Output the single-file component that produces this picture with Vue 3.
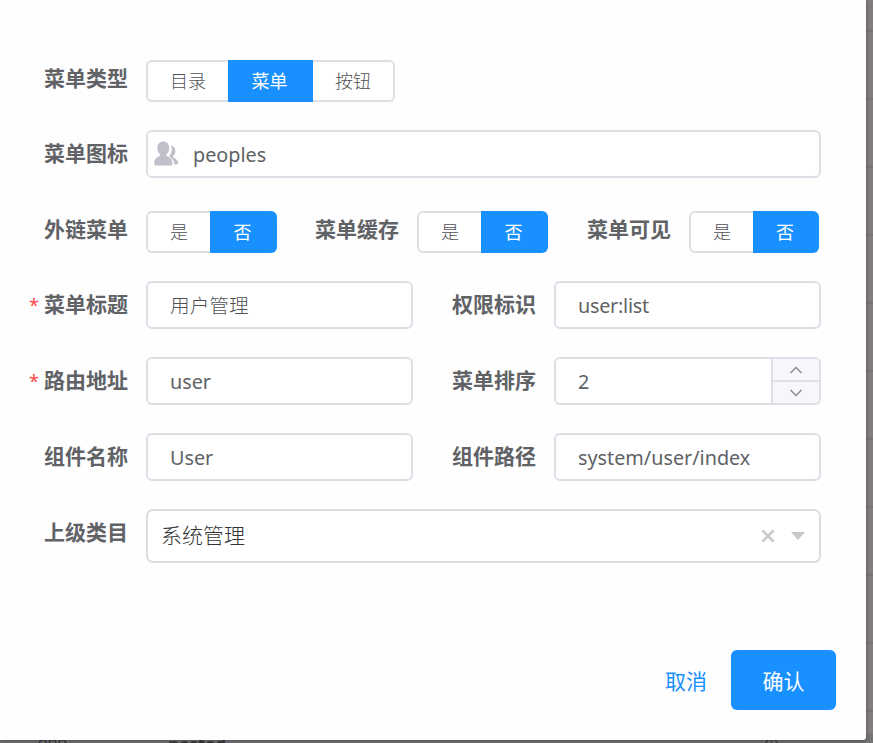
<script setup>
import { ref } from 'vue'

const menuType = ref('菜单')
const menuTypes = ['目录', '菜单', '按钮']
const switches = ref([
  { label: '外链菜单', value: '否' },
  { label: '菜单缓存', value: '否' },
  { label: '菜单可见', value: '否' },
])
const tableLines = Array.from({ length: 11 }, (_, i) => i)
</script>

<template>
  <div class="page">
    <div class="backdrop">
      <div v-for="n in tableLines" :key="n" class="line"></div>
    </div>
    <div class="table-row">
      <span class="cell sort">999</span>
      <span class="cell name">nested</span>
      <span class="cell mark">⊕</span>
    </div>

    <section class="dialog">
      <form class="form" @submit.prevent>
        <div class="row">
          <div class="field">
            <label class="label">菜单类型</label>
            <div class="radios types">
              <button v-for="t in menuTypes" :key="t" type="button" class="radio" :class="{ active: t === menuType }" @click="menuType = t">{{ t }}</button>
            </div>
          </div>
        </div>

        <div class="row">
          <div class="field">
            <label class="label">菜单图标</label>
            <div class="input with-icon">
              <svg class="people" viewBox="0 0 26 26" width="26" height="26">
                <path d="M9.200 0.600C5.600.6 3.400 3.200 3.400 7c0 2.700 1 5 2.700 6.300v1.500C3.500 16 .3 17.800.3 21.200V23.200c0 .8.5 1.200 1.200 1.200h15.600c.7 0 1.200-.4 1.200-1.200v-2c0-3.400-3.200-5.200-5.800-6.400v-1.500C14.200 12 15.200 9.700 15.200 7c0-3.800-2.300-6.400-6-6.400z" />
                <path d="M16.300 4.600c3.300.3 5.100 2.300 5.100 5.300 0 2.300-1 4-2.500 5.300v1c2.400 1.100 5.300 2.900 5.300 5.900 0 .9-.5 1.400-1.300 1.400h-2.500c-.2-3.400-1.700-5.500-4.700-7.400v-1.900c1.400-1.700 2-3.700 2-6 0-1.400-.5-2.600-1.400-3.600z" />
              </svg>
              <span>peoples</span>
            </div>
          </div>
        </div>

        <div class="row thirds">
          <div v-for="s in switches" :key="s.label" class="field">
            <label class="label">{{ s.label }}</label>
            <div class="radios">
              <button v-for="o in ['是', '否']" :key="o" type="button" class="radio" :class="{ active: o === s.value }" @click="s.value = o">{{ o }}</button>
            </div>
          </div>
        </div>

        <div class="row halves">
          <div class="field required">
            <label class="label">菜单标题</label>
            <div class="input cjk">用户管理</div>
          </div>
          <div class="field">
            <label class="label">权限标识</label>
            <div class="input permission">user:list</div>
          </div>
        </div>

        <div class="row halves">
          <div class="field required">
            <label class="label">路由地址</label>
            <div class="input">user</div>
          </div>
          <div class="field">
            <label class="label">菜单排序</label>
            <div class="input number">
              <span class="value">2</span>
              <span class="steps">
                <span class="step"><svg width="14" height="8" viewBox="0 0 14 8"><path d="M1.500 7 7 1.500 12.500 7" /></svg></span>
                <span class="step"><svg width="14" height="8" viewBox="0 0 14 8"><path d="M1.500 1 7 6.500 12.500 1" /></svg></span>
              </span>
            </div>
          </div>
        </div>

        <div class="row halves">
          <div class="field">
            <label class="label">组件名称</label>
            <div class="input">User</div>
          </div>
          <div class="field">
            <label class="label">组件路径</label>
            <div class="input">system/user/index</div>
          </div>
        </div>

        <div class="row">
          <div class="field">
            <label class="label">上级类目</label>
            <div class="tree-select">
              <span class="tree-value">系统管理</span>
              <svg class="clear" width="14" height="14" viewBox="0 0 14 14"><path d="M1.500 1.500 12.500 12.500M12.500 1.500 1.500 12.500" /></svg>
              <svg class="caret" width="14" height="8" viewBox="0 0 14 8"><path d="M0 0H14L7 8Z" /></svg>
            </div>
          </div>
        </div>
      </form>

      <footer class="footer">
        <button type="button" class="cancel">取消</button>
        <button type="button" class="confirm">确认</button>
      </footer>
    </section>
  </div>
</template>

<style>
body {
  margin: 0;
  overflow: hidden;
}
</style>

<style scoped>
.page {
  position: relative;
  width: 873px;
  height: 743px;
  overflow: hidden;
  background: #817c80;
  font-family: "Noto Sans", "Noto Sans CJK SC", sans-serif;
  color: #606266;
}
.page * {
  box-sizing: border-box;
}
.backdrop {
  position: absolute;
  inset: 0;
  padding-top: 30px;
}
.line {
  height: 68px;
  border-top: 2px solid #777276;
}
.table-row {
  position: absolute;
  left: 0;
  right: 0;
  top: 734px;
  display: flex;
  height: 22px;
  background: #757376;
  font-size: 17px;
  line-height: 22px;
  color: #38373a;
}
.sort {
  padding-left: 38px;
  width: 168px;
}
.name {
  width: 595px;
  font-weight: 700;
}
.dialog {
  position: relative;
  width: 866px;
  height: 740px;
  background: #fefefe;
  border-radius: 0 0 3px 0;
  box-shadow: 0 1px 4px rgba(0, 0, 0, 0.35);
}
.form {
  display: grid;
  grid-template-rows: 75px 76px 75px 76px 76px 76px 54px;
  height: 650px;
  padding: 55px 45px 0 44px;
}
.row {
  display: grid;
  height: 48px;
}
.thirds {
  grid-template-columns: 271px 272px 1fr;
}
.halves {
  grid-template-columns: 369px 369px;
  column-gap: 39px;
}
.field {
  position: relative;
  display: flex;
  gap: 18px;
  min-width: 0;
}
.required::before {
  content: "*";
  position: absolute;
  left: -15px;
  top: 0;
  font-size: 18px;
  line-height: 48px;
  color: #ff4949;
}
.label {
  flex: none;
  width: 84px;
  font-size: 21px;
  font-weight: 700;
  line-height: 46px;
  white-space: nowrap;
}
.radios {
  display: flex;
  height: 42px;
  margin-top: 5px;
}
.radio {
  width: 64px;
  padding: 0 0 2px;
  border: 2px solid #dcdfe6;
  border-left-width: 0;
  background: #fff;
  color: #505256;
  font: 300 18px/36px "Noto Sans CJK SC", sans-serif;
}
.radio:first-child {
  border-left-width: 2px;
  border-right: 0;
  border-radius: 6px 0 0 6px;
}
.radio:last-child {
  width: 67px;
  border-radius: 0 6px 6px 0;
}
.thirds .field:last-child .radio:last-child {
  width: 66px;
}
.types .radio,
.types .radio:last-child {
  width: 82px;
}
.types .radio:nth-child(2) {
  width: 85px;
}
.radio.active {
  border-color: #1890ff;
  background: #1890ff;
  color: #fff;
  font-weight: 400;
}
.input {
  display: flex;
  align-items: center;
  flex: 1;
  min-width: 0;
  height: 48px;
  padding-left: 22px;
  border: 2px solid #dcdfe6;
  border-radius: 6px;
  background: #fff;
  font-size: 19.800px;
  white-space: nowrap;
}
.permission {
  letter-spacing: -0.250px;
}
.cjk {
  padding-bottom: 1px;
  font-size: 19.700px;
  font-weight: 300;
  color: #505256;
}
.with-icon {
  padding-left: 6px;
}
.with-icon span {
  margin-left: 13px;
}
.people {
  flex: none;
  fill: #c0c0cb;
}
.number {
  justify-content: space-between;
}
.steps {
  display: flex;
  flex-direction: column;
  width: 48px;
  height: 44px;
  border-left: 2px solid #dcdfe6;
  border-radius: 0 4px 4px 0;
  background: #f7f7fb;
}
.step {
  display: flex;
  flex: 1;
  align-items: center;
  justify-content: center;
}
.step + .step {
  border-top: 2px solid #dcdfe6;
}
.step path {
  fill: none;
  stroke: #85868b;
  stroke-width: 1.300;
}
.tree-select {
  display: flex;
  align-items: center;
  flex: 1;
  height: 54px;
  padding: 0 14px 0 13px;
  border: 2px solid #ddd;
  border-radius: 7px;
  background: #fff;
}
.tree-value {
  flex: 1;
  padding-bottom: 3px;
  font-size: 21px;
  font-weight: 300;
  line-height: 46px;
  color: #333;
}
.clear {
  margin-right: 16px;
  fill: none;
  stroke: #c8c8c8;
  stroke-width: 2.500;
}
.caret {
  fill: #c8c8c8;
}
.footer {
  display: flex;
  justify-content: flex-end;
  gap: 24px;
  padding-right: 30px;
}
.cancel,
.confirm {
  height: 60px;
  padding: 0;
  border: 0;
  font-family: "Noto Sans CJK SC", sans-serif;
  font-size: 21px;
  line-height: 60px;
}
.cancel {
  background: none;
  color: #1890ff;
}
.confirm {
  width: 105px;
  border-radius: 6px;
  background: #1890ff;
  color: #fff;
}
</style>
